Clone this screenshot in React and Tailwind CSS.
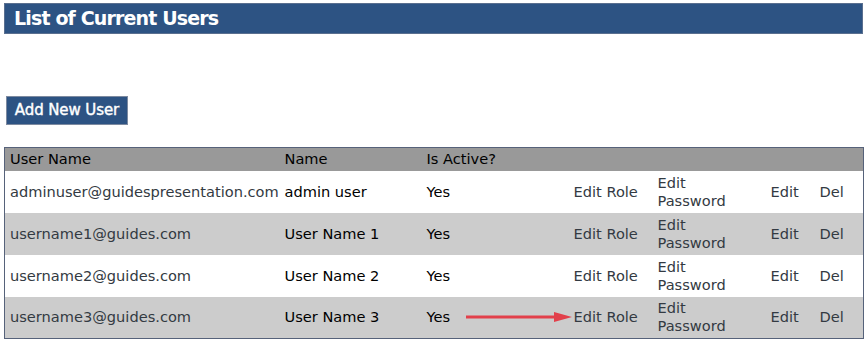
import React from "react";

const users = [
  { email: "adminuser@guidespresentation.com", name: "admin user", active: "Yes" },
  { email: "username1@guides.com", name: "User Name 1", active: "Yes" },
  { email: "username2@guides.com", name: "User Name 2", active: "Yes" },
  { email: "username3@guides.com", name: "User Name 3", active: "Yes", arrow: true },
];

function Arrow() {
  return (
    <svg width="108" height="12" viewBox="0 0 108 12" className="absolute left-[-103px] top-1/2 -translate-y-1/2">
      <line x1="0" y1="6" x2="92" y2="6" stroke="#e2404b" strokeWidth="3" />
      <polygon points="88,1 106,6 88,11" fill="#e2404b" />
    </svg>
  );
}

export default function App() {
  return (
    <div className="bg-white min-h-[346px] pt-[3px] px-[4px] text-[14.6px]" style={{ fontFamily: '"DejaVu Sans", Verdana, sans-serif' }}>
      {/* Title bar */}
      <div className="h-[31px] bg-[#2d5383] border border-[#5a6f8f] flex items-center pl-[9px]">
        <h1 className="text-white font-bold text-[19px] tracking-[-0.85px] leading-none">List of Current Users</h1>
      </div>

      <div className="pt-[62px] pl-[2px]">
        <button className="h-[29px] w-[122px] bg-[#2d5383] border border-[#7d8aa0] text-white text-[15px] tracking-[-0.1px] leading-none [-webkit-text-stroke:0.4px_white]">
          Add New User
        </button>
      </div>

      {/* Users table */}
      <table className="mt-[22px] w-[860px] table-fixed border-collapse border border-[#56627a] text-left">
        <colgroup>
          <col className="w-[275px]" />
          <col className="w-[142px]" />
          <col className="w-[147px]" />
          <col className="w-[84px]" />
          <col className="w-[113px]" />
          <col className="w-[49px]" />
          <col />
        </colgroup>
        <thead>
          <tr className="bg-[#999999] h-[23px] text-black">
            <th className="font-normal pl-[5px] leading-none">User Name</th>
            <th className="font-normal pl-[5px] leading-none">Name</th>
            <th className="font-normal pl-[5px] leading-none">Is Active?</th>
            <th />
            <th />
            <th />
            <th />
          </tr>
        </thead>
        <tbody>
          {users.map((u, i) => (
            <tr key={u.email} className={`h-[42px] ${i % 2 === 1 ? "bg-[#cccccc]" : "bg-white"}`}>
              <td className="pl-[5px] text-[#333a42] whitespace-nowrap">{u.email}</td>
              <td className="pl-[5px] text-black">{u.name}</td>
              <td className="pl-[5px] text-black">{u.active}</td>
              <td className="pl-[5px] text-[#333a42] whitespace-nowrap relative">
                {u.arrow && <Arrow />}
                Edit Role
              </td>
              <td className="pl-[5px] text-[#333a42] leading-[18px]">
                <div>Edit</div>
                <div>Password</div>
              </td>
              <td className="pl-[5px] text-[#333a42]">Edit</td>
              <td className="pl-[5px] text-[#333a42]">Del</td>
            </tr>
          ))}
        </tbody>
      </table>
    </div>
  );
}
